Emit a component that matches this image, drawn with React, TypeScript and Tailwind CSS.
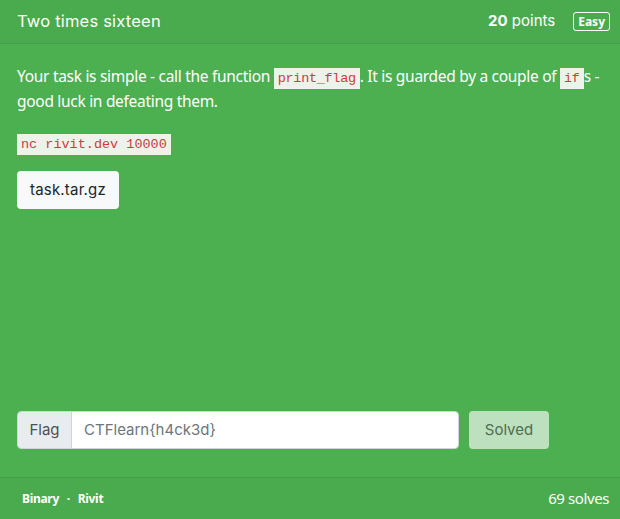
import React from 'react';

const Code: React.FC<{ children: React.ReactNode }> = ({ children }) => (
  <code className="bg-[#edf3ea] text-[#d4383b] px-[4px] py-[3px] text-[13.5px] font-['Liberation_Mono',monospace]">
    {children}
  </code>
);

const App: React.FC = () => {
  return (
    <div className="h-[519px] w-[620px] bg-[#4caf50] flex flex-col text-white font-['Noto_Sans',sans-serif]">
      {/* Header */}
      <div className="h-[44px] shrink-0 bg-[#4aab4e] border-b border-[#439c47] flex items-center justify-between pl-[17px] pr-[10px]">
        <span className="font-['Inter',sans-serif] text-[16.5px] tracking-[0.2px]">Two times sixteen</span>
        <div className="flex items-center gap-[18px]">
          <span className="font-['Inter',sans-serif] text-[15px]">
            <b className="font-bold">20</b> points
          </span>
          <span className="border border-white rounded-[3px] px-[4px] text-[12px] font-bold leading-[17px]">Easy</span>
        </div>
      </div>

      {/* Body */}
      <div className="flex-1 flex flex-col px-[17px] pt-[21px] pb-[28px]">
        <p className="text-[15.5px] leading-[23px] tracking-[-0.3px]">
          Your task is simple - call the function <Code>print_flag</Code>. It is guarded by a couple of <Code>if</Code>s -
          good luck in defeating them.
        </p>
        <div className="mt-[17px]">
          <Code>nc rivit.dev 10000</Code>
        </div>
        <div className="mt-[16px]">
          <button className="h-[38px] px-[13px] bg-[#f8f9fa] rounded-[4px] text-[#212529] text-[15px] font-['Inter',sans-serif] tracking-[0.2px]">
            task.tar.gz
          </button>
        </div>

        <div className="mt-auto flex items-center gap-[10px]">
          <div className="flex h-[38px] w-[442px] rounded-[4px] overflow-hidden border border-[#ced4da]">
            <span className="w-[54px] bg-[#e9ecef] text-[#495057] text-[15px] flex items-center justify-center border-r border-[#ced4da] font-['Inter',sans-serif]">
              Flag
            </span>
            <span className="flex-1 bg-white text-[#6c757d] text-[15px] flex items-center px-[12px] font-['Inter',sans-serif]">
              CTFlearn{'{'}h4ck3d{'}'}
            </span>
          </div>
          <button className="h-[38px] w-[80px] rounded-[4px] bg-[#bde0be] text-[#4f6e50] text-[15px] font-['Inter',sans-serif]">
            Solved
          </button>
        </div>
      </div>

      {/* Footer */}
      <div className="h-[42px] shrink-0 bg-[#4aab4e] border-t border-[#439c47] flex items-center justify-between pl-[22px] pr-[11px]">
        <span className="text-[12px] font-bold tracking-[-0.3px]">
          Binary <span className="mx-[5px]">·</span> Rivit
        </span>
        <span className="text-[15px] tracking-[-0.4px]">69 solves</span>
      </div>
    </div>
  );
};

export default App;
